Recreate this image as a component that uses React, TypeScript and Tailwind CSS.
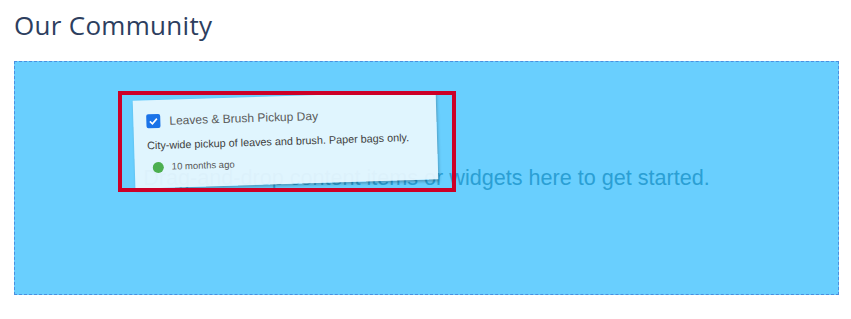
export default function App() {
  return (
    <div className="bg-white w-[851px] h-[319px] px-[14px] pt-[7px]" style={{ fontFamily: '"Liberation Sans", Arial, sans-serif' }}>
      <h1 className="text-[26px] leading-[36px] text-[#2d3e5e] font-['Open_Sans',sans-serif] tracking-[0.3px] mb-[18px]">Our Community</h1>

      {/* Drop zone */}
      <div className="relative w-[825px] h-[234px] bg-[#69cffe] border border-dashed border-[#4b8fe0] flex items-center justify-center">
        <p className="text-[21.6px] text-[#2b9fd4] pt-[1px]">Drag-and-drop content items or widgets here to get started.</p>

        {/* Drag preview card */}
        <div className="absolute left-[119px] top-[34px] w-[303px] h-[88px] bg-[#eaf7fe]/[0.93] shadow-[1px_2px_3px_rgba(0,0,0,0.25)] rotate-[-1.8deg] px-[13px] pt-[12px]">
          <div className="flex items-center gap-[9px]">
            <span className="w-[14px] h-[14px] rounded-[2px] bg-[#1a73e8] flex items-center justify-center">
              <svg width="10" height="10" viewBox="0 0 10 10" fill="none">
                <path d="M1.5 5.2 L4 7.6 L8.6 2.6" stroke="white" strokeWidth="1.6" />
              </svg>
            </span>
            <span className="text-[12px] text-[#5a5a5a]">Leaves &amp; Brush Pickup Day</span>
          </div>
          <p className="mt-[7px] text-[10.8px] text-[#3d3d3d]">City-wide pickup of leaves and brush. Paper bags only.</p>
          <div className="mt-[7px] flex items-center gap-[8px] pl-[5px]">
            <span className="w-[11px] h-[11px] rounded-full bg-[#4caf50]" />
            <span className="text-[9.5px] text-[#555]">10 months ago</span>
          </div>
        </div>

        {/* Selection outline */}
        <div className="absolute left-[103px] top-[29px] w-[338px] h-[101px] border-4 border-[#cc0027]" />
      </div>
    </div>
  );
}
